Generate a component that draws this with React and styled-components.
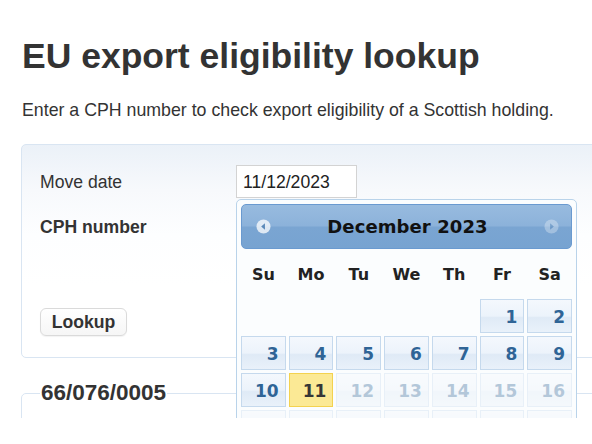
import React from 'react';
import styled, { createGlobalStyle } from 'styled-components';

const GlobalStyle = createGlobalStyle`
  html, body {
    margin: 0;
    padding: 0;
    background: #fff;
  }
  body {
    font-family: "Liberation Sans", Arial, Helvetica, sans-serif;
    color: #333;
  }
`;

const weekDays = ['Su', 'Mo', 'Tu', 'We', 'Th', 'Fr', 'Sa'];

// December 2023 starts on a Friday; today is the 11th.
// Only the rows that are on screen get a number.
const days = [
  null, null, null, null, null, 1, 2,
  3, 4, 5, 6, 7, 8, 9,
  10, 11, 12, 13, 14, 15, 16,
  '', '', '', '', '', '', '',
];

function NavIcon({ dir }) {
  return (
    <svg width="15" height="15" viewBox="0 0 16 16">
      <circle cx="8" cy="8" r="7.5" fill="#fff" />
      {dir === 'prev'
        ? <path d="M9.5 4.5 L5.5 8 L9.5 11.5 Z" fill="#4f7fb0" />
        : <path d="M6.5 4.5 L10.5 8 L6.5 11.5 Z" fill="#4f7fb0" />}
    </svg>
  );
}

export default function App() {
  return (
    <>
      <GlobalStyle />
      <Page>
        <Title>EU export eligibility lookup</Title>
        <Intro>Enter a CPH number to check export eligibility of a Scottish holding.</Intro>

        <FormCard>
          <Row>
            <Label>Move date</Label>
            <FieldWrap>
              <Input defaultValue="11/12/2023" />
              <Calendar>
                <CalHeader>
                  <NavBtn $faded={false}><NavIcon dir="prev" /></NavBtn>
                  <CalTitle>December 2023</CalTitle>
                  <NavBtn $faded={true}><NavIcon dir="next" /></NavBtn>
                </CalHeader>
                <WeekRow>
                  {weekDays.map((d) => <WeekDay key={d}>{d}</WeekDay>)}
                </WeekRow>
                <DayGrid>
                  {days.map((d, i) =>
                    d === null
                      ? <Blank key={'b' + i} />
                      : <Day key={'d' + i} $today={d === 11} $disabled={d === '' || d > 11}>{d}</Day>
                  )}
                </DayGrid>
              </Calendar>
            </FieldWrap>
          </Row>
          <Row>
            <Label $bold>CPH number</Label>
            <FieldWrap>
              <Input defaultValue="" />
            </FieldWrap>
          </Row>
          <Button type="button">Lookup</Button>
        </FormCard>

        <ResultCard>
          <Legend>66/076/0005</Legend>
          <ResultBody />
        </ResultCard>
      </Page>
    </>
  );
}

const Page = styled.div`
  height: 418px;
  overflow: hidden;
  padding: 0 0 0 21px;
  box-sizing: border-box;
`;

const Title = styled.h1`
  margin: 0;
  padding-top: 35px;
  font-size: 35.5px;
  line-height: 42px;
  font-weight: 700;
  color: #333;
  padding-left: 1px;
`;

const Intro = styled.p`
  margin: 21px 0 0 1px;
  font-size: 17.75px;
  line-height: 25px;
  color: #333;
`;

const FormCard = styled.div`
  width: 700px;
  box-sizing: border-box;
  margin-top: 21px;
  padding: 20px 18px 21px;
  border: 1px solid #d9e5f2;
  border-radius: 5px;
  background: linear-gradient(#ebf1f8 0px, #f7f9fc 45px, #fdfeff 90px, #fff 140px);
`;

const Row = styled.div`
  display: flex;
  align-items: center;
  margin-bottom: 12px;
`;

const Label = styled.label`
  width: 196px;
  padding-top: 2px;
  font-size: 17.6px;
  font-weight: ${(p) => (p.$bold ? 700 : 400)};
  color: #333;
`;

const FieldWrap = styled.div`
  position: relative;
`;

const Input = styled.input`
  width: 121px;
  height: 33px;
  box-sizing: border-box;
  padding: 2px 6px 0;
  border: 1px solid #d3d3d3;
  background: #fff;
  font-family: "Liberation Sans", Arial, sans-serif;
  font-size: 17.6px;
  color: #222;
  outline: none;
`;

const Button = styled.button`
  margin-top: 53px;
  width: 87px;
  height: 28px;
  padding: 0;
  border: 1px solid #dadada;
  border-radius: 6px;
  background: linear-gradient(#fff, #f6f6f6);
  box-shadow: 0 1px 1px rgba(0, 0, 0, 0.05);
  font-family: "Liberation Sans", Arial, sans-serif;
  font-size: 17.6px;
  font-weight: 700;
  color: #333;
`;

const ResultCard = styled.fieldset`
  width: 700px;
  box-sizing: border-box;
  margin: 22px 0 0;
  padding: 0 18px;
  border: 1px solid #d9e5f2;
  border-radius: 5px;
  min-height: 120px;
`;

const Legend = styled.legend`
  padding: 0 1px;
  font-size: 22.5px;
  font-weight: 700;
  color: #333;
`;

const ResultBody = styled.div`
  height: 80px;
`;

const Calendar = styled.div`
  position: absolute;
  top: 34px;
  left: 0;
  width: 341px;
  box-sizing: border-box;
  padding: 4px 4px 10px;
  border: 1px solid #b9d3ea;
  border-radius: 5px;
  background: #fbfdfe;
  font-family: "DejaVu Sans", Verdana, sans-serif;
  z-index: 10;
`;

const CalHeader = styled.div`
  display: flex;
  align-items: center;
  justify-content: space-between;
  height: 45px;
  box-sizing: border-box;
  padding: 0 12px 0 14px;
  border: 1px solid #6a9ad0;
  border-radius: 5px;
  background: linear-gradient(#98bbdf 0%, #8cb2da 48%, #7aa5d2 52%, #77a3d1 100%);
`;

const NavBtn = styled.span`
  display: flex;
  opacity: ${(p) => (p.$faded ? 0.3 : 0.75)};
`;

const CalTitle = styled.span`
  font-size: 18px;
  font-weight: 700;
  color: #111;
  letter-spacing: 0.1px;
`;

const WeekRow = styled.div`
  display: grid;
  grid-template-columns: repeat(7, 1fr);
  column-gap: 3px;
  height: 50px;
  align-items: center;
`;

const WeekDay = styled.span`
  text-align: center;
  font-size: 16px;
  font-weight: 700;
  color: #222;
`;

const DayGrid = styled.div`
  display: grid;
  grid-template-columns: repeat(7, 1fr);
  grid-auto-rows: 34px;
  gap: 3px;
`;

const Blank = styled.span``;

const Day = styled.span`
  display: flex;
  align-items: center;
  justify-content: flex-end;
  padding: 2px 6px 0 0;
  border: 1px solid ${(p) => (p.$today ? '#f3d24f' : '#c5d9ed')};
  background: ${(p) =>
    p.$today
      ? '#fbe995'
      : 'linear-gradient(#f4f8fd 0%, #ecf3fb 50%, #dfeaf6 55%, #e9f1fa 100%)'};
  font-size: 17px;
  font-weight: 700;
  color: ${(p) => (p.$today ? '#363636' : '#2f6496')};
  opacity: ${(p) => (p.$disabled ? 0.35 : 1)};
`;
